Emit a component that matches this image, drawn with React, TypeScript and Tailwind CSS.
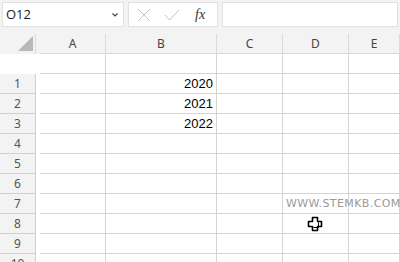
import React from 'react';

const cols = [
  { label: 'A', w: 'w-[66px]' },
  { label: 'B', w: 'w-[111px]' },
  { label: 'C', w: 'w-[66px]' },
  { label: 'D', w: 'w-[66px]' },
  { label: 'E', w: 'flex-1' },
];

const values: Record<number, string> = { 1: '2020', 2: '2021', 3: '2022' };

const CellCursor = () => (
  <svg width="16" height="16" viewBox="0 0 16 16" className="absolute left-[307px] top-[216px]">
    <path
      d="M5.5 1.5h5v4h4v5h-4v4h-5v-4h-4v-5h4z"
      fill="#fff"
      stroke="#000"
      strokeWidth="1.6"
      strokeLinejoin="round"
    />
    <path d="M11.5 6.5v5h-5" fill="none" stroke="#000" strokeWidth="1" />
  </svg>
);

export default function App() {
  return (
    <div className="relative w-[400px] h-[262px] overflow-hidden bg-white" style={{ fontFamily: '"Open Sans", sans-serif' }}>
      {/* formula bar */}
      <div className="flex h-[34px] gap-1 bg-[#f3f3f3] px-[2px] pt-[2px] pb-[7px]">
        <div className="flex w-[122px] items-center justify-between border border-[#e1e1e1] bg-white pl-[3px] pr-[4px]">
          <span className="text-[13px] text-[#222]">O12</span>
          <svg width="8" height="6" viewBox="0 0 8 6">
            <path d="M1.5 1.5l2.5 2.5 2.5-2.5" fill="none" stroke="#444" strokeWidth="1.2" />
          </svg>
        </div>
        <div className="flex w-[90px] items-center border border-[#e1e1e1] bg-white pl-[8px]">
          <svg width="14" height="14" viewBox="0 0 14 14" className="mr-[13px]">
            <path d="M1 1l12 12M13 1L1 13" stroke="#c4c4c4" strokeWidth="1" />
          </svg>
          <svg width="16" height="12" viewBox="0 0 16 12" className="mr-[15px]">
            <path d="M1 6l4.5 5L15 1" fill="none" stroke="#c4c4c4" strokeWidth="1" />
          </svg>
          <span className="text-[14px] italic text-[#333]" style={{ fontFamily: '"Liberation Serif", serif' }}>
            fx
          </span>
        </div>
        <div className="flex-1 border border-[#e1e1e1] bg-white" />
      </div>

      {/* column header */}
      <div className="flex h-[20px] bg-[#f3f3f3]" style={{ fontFamily: '"Noto Sans", sans-serif' }}>
        <div className="relative w-[36px] border-r border-[#dadada]">
          <svg width="16" height="15" viewBox="0 0 16 15" className="absolute left-[18px] top-[2px]">
            <path d="M15 0V15H0z" fill="#b8b8b8" />
          </svg>
        </div>
        <div className="w-[4px]" />
        {cols.map((c) => (
          <div
            key={c.label}
            className={`${c.w} flex items-center justify-center border-r border-b border-[#dadada] text-[12px] text-[#444]`}
          >
            {c.label}
          </div>
        ))}
      </div>

      {/* blank frozen row */}
      <div className="flex h-[20px]">
        <div className="w-[40px]" />
        {cols.map((c) => (
          <div key={c.label} className={`${c.w} border-r border-b border-[#d4d4d4]`} />
        ))}
      </div>

      {/* body rows */}
      {Array.from({ length: 10 }, (_, i) => i + 1).map((r) => (
        <div key={r} className="flex h-[20px]">
          <div
            className="flex w-[36px] items-center justify-center border-r border-b border-[#d0d0d0] bg-[#f3f3f3] text-[12px] text-[#555]"
            style={{ fontFamily: '"Noto Sans", sans-serif' }}
          >
            {r}
          </div>
          <div className="w-[4px]" />
          {cols.map((c) => (
            <div
              key={c.label}
              className={`${c.w} flex items-center justify-end border-r border-b border-[#d4d4d4] pr-[3px] text-[13px] text-black`}
              style={{ fontFamily: '"Liberation Sans", sans-serif' }}
            >
              {c.label === 'B' ? values[r] : null}
            </div>
          ))}
        </div>
      ))}

      {/* watermark */}
      <div
        className="absolute left-[286px] top-[196px] whitespace-nowrap text-[11px] tracking-[0.4px] text-[#9a9a9a]"
        style={{ fontFamily: '"DejaVu Sans", sans-serif' }}
      >
        WWW.STEMKB.COM
      </div>

      <CellCursor />
    </div>
  );
}
